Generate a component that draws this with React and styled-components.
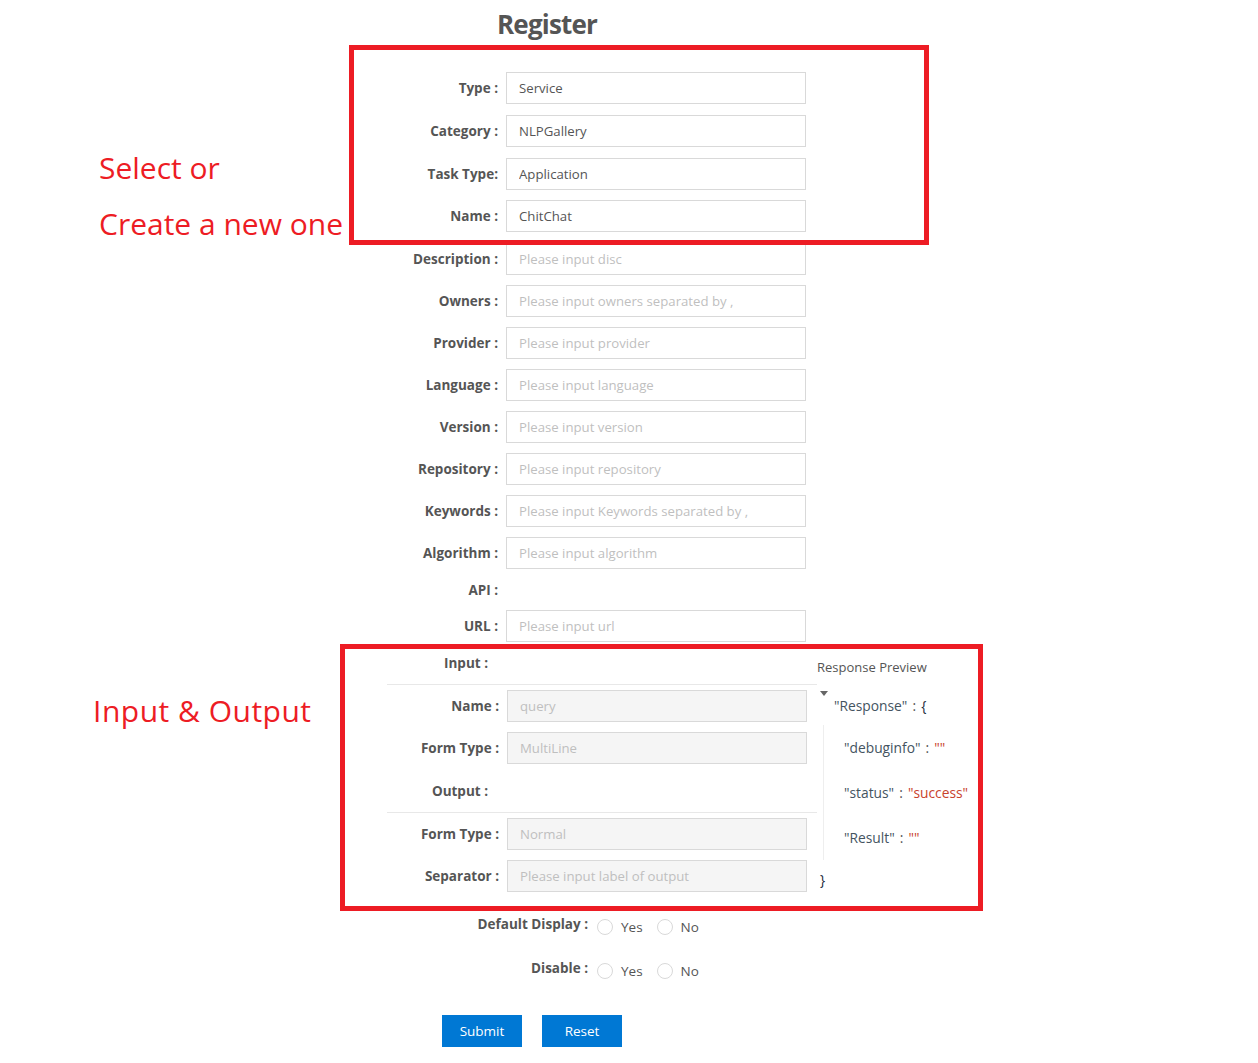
import styled, { createGlobalStyle } from "styled-components";

const GlobalStyle = createGlobalStyle`
  body {
    margin: 0;
    background: #fff;
    font-family: "Open Sans", "Noto Sans", sans-serif;
    color: #555;
  }
  * { box-sizing: border-box; }
`;

const Page = styled.div`
  position: relative;
  width: 1258px;
  min-height: 1063px;
  overflow: hidden;
`;

const Title = styled.h1`
  margin: 0;
  padding-left: 497px;
  height: 48px;
  line-height: 48px;
  font-size: 26px;
  font-weight: 700;
  color: #555;
  letter-spacing: -0.8px;
`;

const Form = styled.div`
  padding-left: 300px;
  padding-top: 24px;
`;

const Row = styled.div`
  display: flex;
  align-items: center;
  height: ${(p) => (p.$short ? "21px" : "32px")};
  margin-bottom: ${(p) => p.$gap || 10}px;
`;

const Label = styled.label`
  flex-shrink: 0;
  width: ${(p) => p.$width || 206}px;
  padding-right: ${(p) => (p.$pad == null ? 8 : p.$pad)}px;
  text-align: right;
  font-size: 13.5px;
  font-weight: 700;
  color: #555;
  white-space: nowrap;
`;

const Input = styled.input`
  width: 300px;
  height: 32px;
  padding: 0 12px;
  border: 1px solid #d9d9d9;
  border-radius: 0;
  background: ${(p) => (p.disabled ? "#f5f5f5" : "#fff")};
  font-family: inherit;
  font-size: 13.2px;
  color: #555;
  outline: none;
  &::placeholder {
    color: #bfbfbf;
  }
`;

const IOSection = styled.div`
  display: flex;
  margin-left: 87px;
`;

const IOFields = styled.div`
  width: 430px;
  flex-shrink: 0;
`;

const SubHeader = styled.div`
  display: flex;
  align-items: center;
  height: 33px;
  padding-bottom: 10px;
  margin-top: ${(p) => p.$gap || 0}px;
  margin-bottom: 5px;
  border-bottom: 1px solid #e8e8e8;
`;

const Preview = styled.div`
  padding-top: 4px;
  font-size: 13.8px;
  color: #555;
`;

const PreviewTitle = styled.div`
  height: 22px;
  line-height: 22px;
  font-size: 13px;
  color: #555;
`;

const JsonHead = styled.div`
  display: flex;
  align-items: flex-start;
  margin-top: 17px;
  height: 22px;
  line-height: 22px;
  word-spacing: 1.5px;
`;

const Caret = styled.span`
  width: 0;
  height: 0;
  margin: -4px 6px 0 3px;
  border-left: 4px solid transparent;
  border-right: 4px solid transparent;
  border-top: 5px solid #666;
`;

const JsonBody = styled.div`
  margin: 8px 0 0 6px;
  padding-left: 20px;
  border-left: 1px solid #eee;
`;

const JsonLine = styled.div`
  height: 45px;
  line-height: 45px;
  white-space: nowrap;
  word-spacing: 1.5px;
`;

const Key = styled.span`
  color: #44545f;
`;

const Value = styled.span`
  color: #c8422c;
`;

const Brace = styled.span`
  color: #1c2a3a;
`;

const CloseBrace = styled.div`
  margin: 9px 0 0 3px;
  height: 22px;
  line-height: 22px;
  color: #1c2a3a;
`;

const RadioRow = styled.div`
  display: flex;
  align-items: center;
  height: 22px;
  margin-top: ${(p) => p.$gap}px;
`;

const RadioLabel = styled(Label)`
  width: 297px;
  padding-right: 9px;
  margin-top: -6px;
`;

const Option = styled.label`
  display: flex;
  align-items: center;
  margin-right: 14px;
  font-size: 13.5px;
  color: #555;
`;

const Circle = styled.span`
  width: 16px;
  height: 16px;
  margin-right: 8px;
  border: 1px solid #d9d9d9;
  border-radius: 50%;
  background: #fff;
`;

const Buttons = styled.div`
  display: flex;
  gap: 20px;
  margin: 33px 0 0 142px;
`;

const Button = styled.button`
  width: 80px;
  height: 32px;
  border: none;
  border-radius: 0;
  background: #0078d4;
  color: #fff;
  font-family: inherit;
  font-size: 13.5px;
`;

const Marker = styled.div`
  position: absolute;
  left: ${(p) => p.$x}px;
  top: ${(p) => p.$y}px;
  width: ${(p) => p.$w}px;
  height: ${(p) => p.$h}px;
  border: 5px solid #ed1c24;
  pointer-events: none;
`;

const Note = styled.div`
  position: absolute;
  left: ${(p) => p.$x}px;
  top: ${(p) => p.$y}px;
  font-size: 30px;
  line-height: 40px;
  letter-spacing: ${(p) => p.$spacing || 0}px;
  color: #ed1c24;
  white-space: nowrap;
`;

const mainFields = [
  ["Type :", "Service", null, 11],
  ["Category :", "NLPGallery", null, 11],
  ["Task Type:", "Application", null, 10],
  ["Name :", "ChitChat", null, 11],
  ["Description :", null, "Please input disc"],
  ["Owners :", null, "Please input owners separated by ,"],
  ["Provider :", null, "Please input provider"],
  ["Language :", null, "Please input language"],
  ["Version :", null, "Please input version"],
  ["Repository :", null, "Please input repository"],
  ["Keywords :", null, "Please input Keywords separated by ,"],
  ["Algorithm :", null, "Please input algorithm"],
];

function Radios() {
  return (
    <>
      <Option>
        <Circle />
        Yes
      </Option>
      <Option>
        <Circle />
        No
      </Option>
    </>
  );
}

export default function App() {
  return (
    <Page>
      <GlobalStyle />
      <Title>Register</Title>
      <Form>
        {mainFields.map(([label, value, placeholder, gap]) => (
          <Row key={label} $gap={gap}>
            <Label>{label}</Label>
            <Input
              defaultValue={value || undefined}
              placeholder={placeholder || undefined}
            />
          </Row>
        ))}
        <Row $short>
          <Label>API :</Label>
        </Row>
        <Row>
          <Label>URL :</Label>
          <Input placeholder="Please input url" />
        </Row>

        <IOSection>
          <IOFields>
            <SubHeader>
              <Label $width={101} $pad={0}>
                Input :
              </Label>
            </SubHeader>
            <Row>
              <Label $width={120}>Name :</Label>
              <Input disabled placeholder="query" />
            </Row>
            <Row>
              <Label $width={120}>Form Type :</Label>
              <Input disabled placeholder="MultiLine" />
            </Row>
            <SubHeader $gap={16}>
              <Label $width={101} $pad={0}>
                Output :
              </Label>
            </SubHeader>
            <Row>
              <Label $width={120}>Form Type :</Label>
              <Input disabled placeholder="Normal" />
            </Row>
            <Row>
              <Label $width={120}>Separator :</Label>
              <Input disabled placeholder="Please input label of output" />
            </Row>
          </IOFields>
          <Preview>
            <PreviewTitle>Response Preview</PreviewTitle>
            <JsonHead>
              <Caret />
              <span>
                <Key>"Response"</Key> : <Brace>{"{"}</Brace>
              </span>
            </JsonHead>
            <JsonBody>
              <JsonLine>
                <Key>"debuginfo"</Key> : <Value>""</Value>
              </JsonLine>
              <JsonLine>
                <Key>"status"</Key> : <Value>"success"</Value>
              </JsonLine>
              <JsonLine>
                <Key>"Result"</Key> : <Value>""</Value>
              </JsonLine>
            </JsonBody>
            <CloseBrace>{"}"}</CloseBrace>
          </Preview>
        </IOSection>

        <RadioRow $gap={14}>
          <RadioLabel>Default Display :</RadioLabel>
          <Radios />
        </RadioRow>
        <RadioRow $gap={22}>
          <RadioLabel>Disable :</RadioLabel>
          <Radios />
        </RadioRow>

        <Buttons>
          <Button>Submit</Button>
          <Button>Reset</Button>
        </Buttons>
      </Form>

      <Marker $x={349} $y={45} $w={580} $h={200} />
      <Marker $x={340} $y={644} $w={643} $h={267} />
      <Note $x={99} $y={148}>Select or</Note>
      <Note $x={99} $y={204}>Create a new one</Note>
      <Note $x={93} $y={691} $spacing={0.5}>
        Input &amp; Output
      </Note>
    </Page>
  );
}
